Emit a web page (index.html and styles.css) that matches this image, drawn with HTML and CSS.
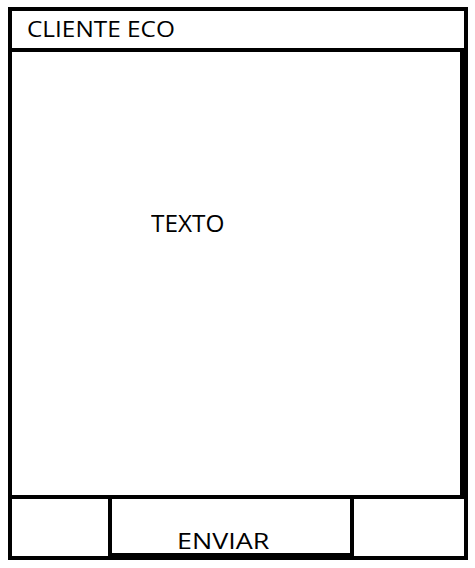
FILE: index.html
```html
<!DOCTYPE html>
<html lang="es">
<head>
<meta charset="utf-8">
<title>Cliente Eco</title>
<link rel="stylesheet" href="styles.css">
</head>
<body>
<div class="app">
  <header class="header"><span class="label label-title">CLIENTE ECO</span></header>
  <main class="content"><span class="label label-text">TEXTO</span></main>
  <footer class="footer">
    <div class="cell cell-left"></div>
    <div class="cell cell-mid"><span class="label label-send">ENVIAR</span></div>
    <div class="cell cell-right"></div>
  </footer>
</div>
</body>
</html>
```
FILE: styles.css
```css
* { box-sizing: border-box; }
html, body { margin: 0; padding: 0; background: #fff; }
body { font-family: "Open Sans", "Noto Sans", sans-serif; color: #000; }

.app {
  display: flex;
  flex-direction: column;
  width: 460px;
  margin: 7px 0 0 8px;
}

.label {
  display: inline-block;
  font-size: 21px;
  font-weight: 500;
  line-height: 27px;
  white-space: nowrap;
  transform-origin: left top;
}

.header {
  height: 45px;
  border: 4px solid #000;
  padding: 5px 0 0 15px;
}
.label-title { transform: scaleX(1.16); }

.content {
  height: 447px;
  border-left: 4px solid #000;
  border-right: 8px solid #000;
  border-bottom: 4px solid #000;
  padding: 158px 0 0 139px;
}
.label-text { font-size: 23px; transform: scaleX(1.06); }

.footer {
  display: flex;
  height: 61px;
  border-left: 4px solid #000;
  border-right: 4px solid #000;
  border-bottom: 4px solid #000;
}
.cell { height: 100%; }
.cell-left { width: 100px; border-right: 4px solid #000; }
.cell-mid {
  width: 242px;
  border-right: 4px solid #000;
  border-bottom: 3px solid #000;
  padding: 30px 0 0 65px;
}
.cell-right { flex: 1; }
.label-send { line-height: 24px; transform: scaleX(1.28); }
```
